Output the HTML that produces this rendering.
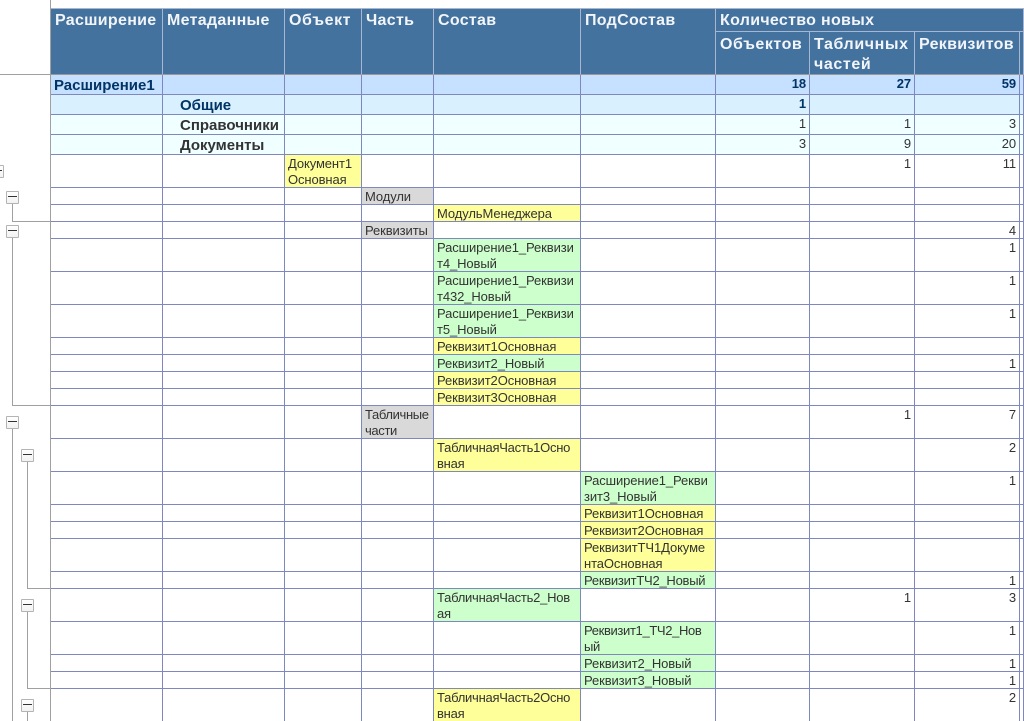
<!DOCTYPE html>
<html lang="ru"><head><meta charset="utf-8"><title>Отчет</title>
<style>
html,body{margin:0;padding:0;background:#fff;width:1024px;height:721px;overflow:hidden}
#w{position:relative;width:1024px;height:721px;overflow:hidden;font-family:"Liberation Sans",Arial,sans-serif}
table{position:absolute;left:51px;top:9px;width:973px;table-layout:fixed;border-collapse:separate;border-spacing:0;font-size:13px;line-height:16px;color:#333;letter-spacing:-.1px}
td,th{box-sizing:border-box;padding:1px 0 0 3px;border-right:1px solid #7F88BE;border-bottom:1px solid #7F88BE;vertical-align:top;white-space:nowrap;overflow:hidden;text-align:left}
td:after,th:after{content:"";display:block;height:0;margin-top:-1px}
th{background:#44729F;color:#F2F5F9;font-size:16px;line-height:20px;font-weight:bold;padding:2px 0 0 4px;border-color:#A9B6D2;letter-spacing:.3px}
tr.h2 th{border-bottom-color:#999;padding-top:3px}
tr.h1 th.b{border-bottom-color:#999}
td.n{text-align:right;padding:1px 3px 0 0}
.a td{background:#C6E0FF;color:#003366;font-weight:bold}
.b td{background:#D9F0FF;color:#003366;font-weight:bold}
.c td{background:#F0FFFF}
.t{font-size:15px;font-weight:bold;padding-left:3px!important;padding-top:2px!important;line-height:18px;letter-spacing:0}
.m{padding-left:17px!important}
.c .t{color:#333}
td.y{background:#FFFF99}
td.g{background:#CCFFCC}
td.s{background:#D9D9D9}
.q{letter-spacing:-.25px}
.r{letter-spacing:-.35px}
.l{position:absolute;background:#A0A0A0}
.x{position:absolute;box-sizing:border-box;width:13px;height:13px;border:1px solid #B4B4B4;border-radius:1px;background:linear-gradient(#fff,#F2F2F2)}
.x:after{content:"";position:absolute;left:1px;right:1px;top:4px;height:1px;background:#333}
</style></head><body><div id="w">
<div class="l" style="left:50px;top:0;width:1px;height:721px"></div>
<div class="l" style="left:0;top:74px;width:51px;height:1px"></div>
<div class="l" style="left:51px;top:8px;width:973px;height:1px;background:#A9B6D2"></div>
<div class="l" style="left:12px;top:203px;width:1px;height:18px"></div>
<div class="l" style="left:12px;top:221px;width:38px;height:1px"></div>
<div class="l" style="left:12px;top:237px;width:1px;height:168px"></div>
<div class="l" style="left:12px;top:405px;width:38px;height:1px"></div>
<div class="l" style="left:12px;top:428px;width:1px;height:293px"></div>
<div class="l" style="left:27px;top:461px;width:1px;height:127px"></div>
<div class="l" style="left:27px;top:588px;width:23px;height:1px"></div>
<div class="l" style="left:27px;top:611px;width:1px;height:77px"></div>
<div class="l" style="left:27px;top:688px;width:23px;height:1px"></div>
<div class="l" style="left:27px;top:711px;width:1px;height:10px"></div>
<div class="x" style="left:-9px;top:165px"></div>
<div class="x" style="left:6px;top:191px"></div>
<div class="x" style="left:6px;top:225px"></div>
<div class="x" style="left:6px;top:416px"></div>
<div class="x" style="left:21px;top:449px"></div>
<div class="x" style="left:21px;top:599px"></div>
<div class="x" style="left:21px;top:699px"></div>
<table>
<colgroup><col style="width:112px"><col style="width:122px"><col style="width:77px"><col style="width:72px"><col style="width:147px"><col style="width:135px"><col style="width:94px"><col style="width:105px"><col style="width:105px"><col style="width:4px"></colgroup>
<tr class="h1" style="height:23px"><th class="b" rowspan="2">Расширение</th><th class="b" rowspan="2">Метаданные</th><th class="b" rowspan="2" style="letter-spacing:.6px">Объект</th><th class="b" rowspan="2">Часть</th><th class="b" rowspan="2">Состав</th><th class="b" rowspan="2">ПодСостав</th><th colspan="4">Количество новых</th></tr>
<tr class="h2" style="height:43px"><th style="letter-spacing:.55px">Объектов</th><th style="letter-spacing:.6px">Табличных<br>частей</th><th>Реквизитов</th><th></th></tr>
<tr class="a" style="height:20px"><td class="t">Расширение1</td><td></td><td></td><td></td><td></td><td></td><td class="n">18</td><td class="n">27</td><td class="n">59</td><td></td></tr>
<tr class="b" style="height:20px"><td></td><td class="t m">Общие</td><td></td><td></td><td></td><td></td><td class="n">1</td><td></td><td></td><td></td></tr>
<tr class="c" style="height:20px"><td></td><td class="t m">Справочники</td><td></td><td></td><td></td><td></td><td class="n">1</td><td class="n">1</td><td class="n">3</td><td></td></tr>
<tr class="c" style="height:20px"><td></td><td class="t m">Документы</td><td></td><td></td><td></td><td></td><td class="n">3</td><td class="n">9</td><td class="n">20</td><td></td></tr>
<tr style="height:33px"><td></td><td></td><td class="y">Документ1<br>Основная</td><td></td><td></td><td></td><td></td><td class="n">1</td><td class="n">11</td><td></td></tr>
<tr style="height:17px"><td></td><td></td><td></td><td class="s">Модули</td><td></td><td></td><td></td><td></td><td></td><td></td></tr>
<tr style="height:17px"><td></td><td></td><td></td><td></td><td class="y">МодульМенеджера</td><td></td><td></td><td></td><td></td><td></td></tr>
<tr style="height:17px"><td></td><td></td><td></td><td class="s">Реквизиты</td><td></td><td></td><td></td><td></td><td class="n">4</td><td></td></tr>
<tr style="height:33px"><td></td><td></td><td></td><td></td><td class="g">Расширение1_Реквизи<br>т4_Новый</td><td></td><td></td><td></td><td class="n">1</td><td></td></tr>
<tr style="height:33px"><td></td><td></td><td></td><td></td><td class="g">Расширение1_Реквизи<br>т432_Новый</td><td></td><td></td><td></td><td class="n">1</td><td></td></tr>
<tr style="height:33px"><td></td><td></td><td></td><td></td><td class="g">Расширение1_Реквизи<br>т5_Новый</td><td></td><td></td><td></td><td class="n">1</td><td></td></tr>
<tr style="height:17px"><td></td><td></td><td></td><td></td><td class="y">Реквизит1Основная</td><td></td><td></td><td></td><td></td><td></td></tr>
<tr style="height:17px"><td></td><td></td><td></td><td></td><td class="g">Реквизит2_Новый</td><td></td><td></td><td></td><td class="n">1</td><td></td></tr>
<tr style="height:17px"><td></td><td></td><td></td><td></td><td class="y">Реквизит2Основная</td><td></td><td></td><td></td><td></td><td></td></tr>
<tr style="height:17px"><td></td><td></td><td></td><td></td><td class="y">Реквизит3Основная</td><td></td><td></td><td></td><td></td><td></td></tr>
<tr style="height:33px"><td></td><td></td><td></td><td class="s r">Табличные<br>части</td><td></td><td></td><td></td><td class="n">1</td><td class="n">7</td><td></td></tr>
<tr style="height:33px"><td></td><td></td><td></td><td></td><td class="y q">ТабличнаяЧасть1Осно<br>вная</td><td></td><td></td><td></td><td class="n">2</td><td></td></tr>
<tr style="height:33px"><td></td><td></td><td></td><td></td><td></td><td class="g">Расширение1_Рекви<br>зит3_Новый</td><td></td><td></td><td class="n">1</td><td></td></tr>
<tr style="height:17px"><td></td><td></td><td></td><td></td><td></td><td class="y">Реквизит1Основная</td><td></td><td></td><td></td><td></td></tr>
<tr style="height:17px"><td></td><td></td><td></td><td></td><td></td><td class="y">Реквизит2Основная</td><td></td><td></td><td></td><td></td></tr>
<tr style="height:33px"><td></td><td></td><td></td><td></td><td></td><td class="y">РеквизитТЧ1Докуме<br>нтаОсновная</td><td></td><td></td><td></td><td></td></tr>
<tr style="height:17px"><td></td><td></td><td></td><td></td><td></td><td class="g q">РеквизитТЧ2_Новый</td><td></td><td></td><td class="n">1</td><td></td></tr>
<tr style="height:33px"><td></td><td></td><td></td><td></td><td class="g q">ТабличнаяЧасть2_Нов<br>ая</td><td></td><td></td><td class="n">1</td><td class="n">3</td><td></td></tr>
<tr style="height:33px"><td></td><td></td><td></td><td></td><td></td><td class="g r">Реквизит1_ТЧ2_Нов<br>ый</td><td></td><td></td><td class="n">1</td><td></td></tr>
<tr style="height:17px"><td></td><td></td><td></td><td></td><td></td><td class="g">Реквизит2_Новый</td><td></td><td></td><td class="n">1</td><td></td></tr>
<tr style="height:17px"><td></td><td></td><td></td><td></td><td></td><td class="g">Реквизит3_Новый</td><td></td><td></td><td class="n">1</td><td></td></tr>
<tr style="height:33px"><td></td><td></td><td></td><td></td><td class="y q">ТабличнаяЧасть2Осно<br>вная</td><td></td><td></td><td></td><td class="n">2</td><td></td></tr>
</table>
</div></body></html>
